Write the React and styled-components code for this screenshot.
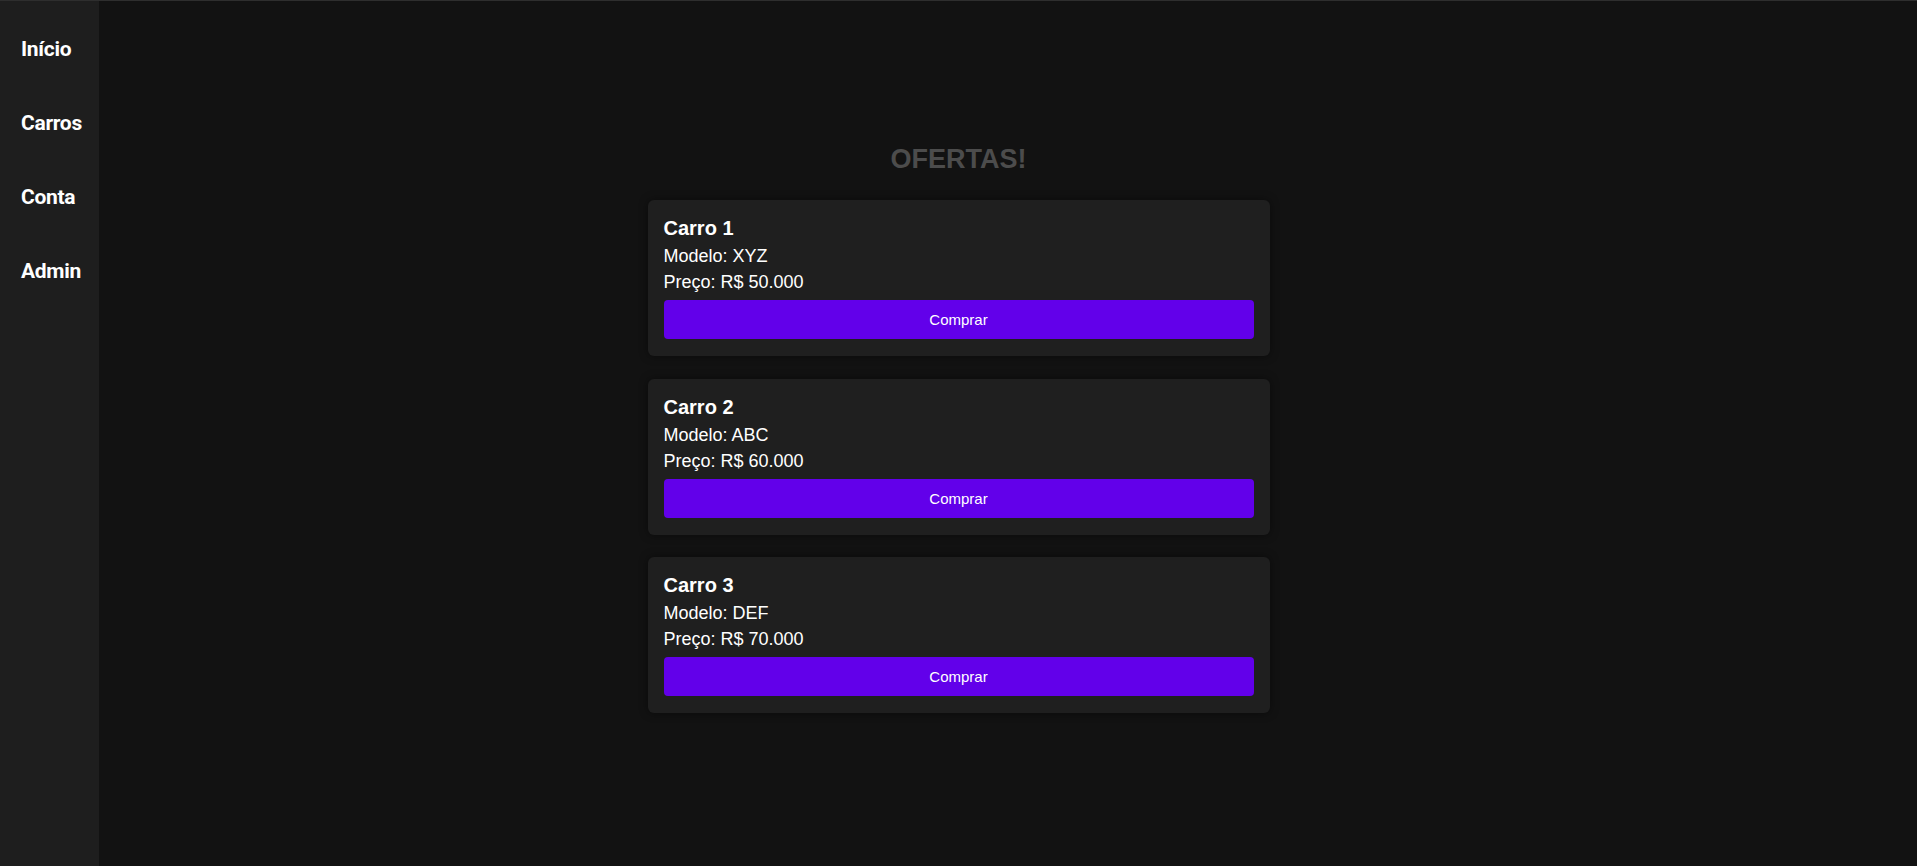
import React from 'react';
import styled, { createGlobalStyle } from 'styled-components';

const GlobalStyle = createGlobalStyle`
  html, body {
    margin: 0;
    padding: 0;
    background-color: #121212;
    font-family: "Liberation Sans", Arial, sans-serif;
    color: #ffffff;
  }
`;

// Page layout
const Page = styled.div`
  display: flex;
  min-height: 100vh;
  box-sizing: border-box;
  border-top: 1px solid #2e2e2e;
  background-color: #121212;
`;

// Left navigation
const Sidebar = styled.nav`
  display: flex;
  flex-direction: column;
  gap: 50px;
  width: 99px;
  flex-shrink: 0;
  box-sizing: border-box;
  padding: 36px 0 0 21px;
  background-color: #1e1e1e;
`;

const NavLink = styled.a`
  font-family: Roboto, "Liberation Sans", sans-serif;
  font-size: 21px;
  font-weight: 700;
  letter-spacing: -0.3px;
  color: #ffffff;
  text-decoration: none;
  cursor: pointer;
`;

const Main = styled.main`
  flex: 1;
  display: flex;
  justify-content: center;
  padding: 143px 99px 0 0;
`;

const Offers = styled.section`
  display: flex;
  flex-direction: column;
  align-items: center;
  width: 622px;
`;

const Title = styled.h2`
  margin: 0 0 25px;
  font-size: 27px;
  font-weight: 700;
  color: #4c4c4c;
`;

const Card = styled.article`
  display: flex;
  flex-direction: column;
  width: 100%;
  box-sizing: border-box;
  padding: 17px 16px 17px;
  margin-bottom: 22.5px;
  background-color: #1f1f1f;
  border-radius: 6px;
  box-shadow: 0 0 10px rgba(0, 0, 0, 0.45);
`;

const CardTitle = styled.h3`
  margin: 0 0 6px;
  font-size: 20px;
  font-weight: 700;
  color: #ffffff;
`;

const Info = styled.p`
  margin: 0 0 5px;
  font-size: 18px;
  color: #ffffff;
`;

const BuyButton = styled.button`
  margin-top: 2px;
  height: 39px;
  width: 100%;
  border: none;
  border-radius: 4px;
  background-color: #6200ea;
  color: #ffffff;
  font-family: "Liberation Sans", Arial, sans-serif;
  font-size: 15px;
  cursor: pointer;
`;

const cars = [
  { name: 'Carro 1', model: 'XYZ', price: 'R$ 50.000' },
  { name: 'Carro 2', model: 'ABC', price: 'R$ 60.000' },
  { name: 'Carro 3', model: 'DEF', price: 'R$ 70.000' },
];

const App = () => (
  <>
    <GlobalStyle />
    <Page>
      <Sidebar>
        <NavLink>Início</NavLink>
        <NavLink>Carros</NavLink>
        <NavLink>Conta</NavLink>
        <NavLink>Admin</NavLink>
      </Sidebar>
      <Main>
        <Offers>
          <Title>OFERTAS!</Title>
          {cars.map((car) => (
            <Card key={car.name}>
              <CardTitle>{car.name}</CardTitle>
              <Info>Modelo: {car.model}</Info>
              <Info>Preço: {car.price}</Info>
              <BuyButton>Comprar</BuyButton>
            </Card>
          ))}
        </Offers>
      </Main>
    </Page>
  </>
);

export default App;
